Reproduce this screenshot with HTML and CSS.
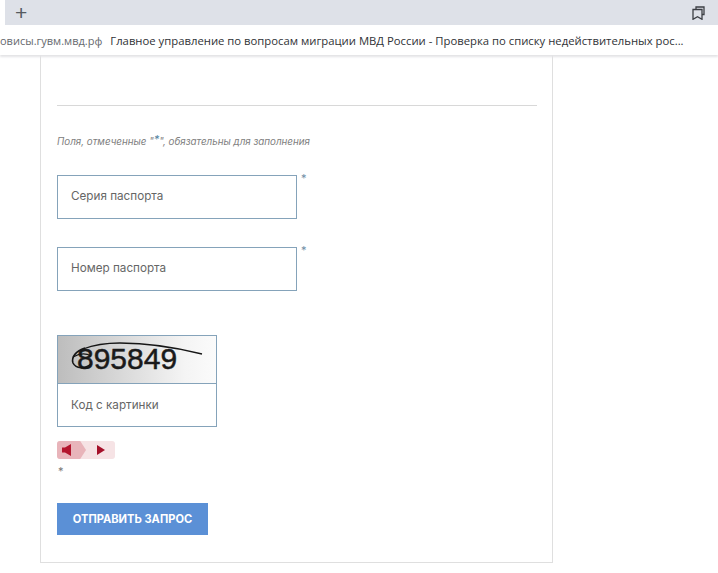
FILE: index.html
```html
<!DOCTYPE html>
<html lang="ru">
<head>
    <meta charset="UTF-8">
    <meta name="viewport" content="width=device-width, initial-scale=1.0">
    <title>Проверка по списку недействительных паспортов</title>
    <link rel="stylesheet" href="styles.css">
</head>
<body>
    <div class="tabbar">
        <span class="new-tab">+</span>
        <svg class="tab-icon" width="13" height="14" viewBox="0 0 13 14" fill="none" stroke="#3c3f44" stroke-width="1.3">
            <path d="M4 3.500V1h8v7.500h-2"/>
            <path d="M1 3.500h9v9.800L5.500 10.800 1 13.300z"/>
        </svg>
    </div>
    <div class="bookmarks">
        <span class="bookmark-muted">овисы.гувм.мвд.рф</span>
        <span class="bookmark-title">Главное управление по вопросам миграции МВД России - Проверка по списку недействительных рос...</span>
    </div>
    <div class="page">
        <div class="card">
            <div class="divider"></div>
            <p class="note">Поля, отмеченные "<span class="note-star">*</span>", обязательны для заполнения</p>
            <div class="field">
                <div class="input">Серия паспорта</div>
                <span class="star">*</span>
            </div>
            <div class="field">
                <div class="input">Номер паспорта</div>
                <span class="star">*</span>
            </div>
            <div class="captcha">
                <div class="captcha-image">
                    <span class="captcha-digits">895849</span>
                    <svg class="captcha-noise" width="158" height="47" viewBox="0 0 158 47" fill="none" stroke="#161616">
                        <path d="M25 13C38 8 50 7 62 7C95 7 120 12 144 18" stroke-width="1.300"/>
                        <path d="M27 12C18 15 13 21 15 27C18 33 27 33 33 28" stroke-width="1.600"/>
                        <path d="M15 21C22 17 28 17 33 20" stroke-width="1.200"/>
                    </svg>
                </div>
                <div class="captcha-input">Код с картинки</div>
            </div>
            <div class="audio">
                <div class="audio-btn audio-btn-active">
                    <svg width="10" height="12" viewBox="0 0 10 12"><path d="M0 3.500h3L9 0v12L3 8.500H0z" fill="#b3152d"/></svg>
                </div>
                <div class="audio-btn">
                    <svg width="8" height="10" viewBox="0 0 8 10"><path d="M0 0l8 5-8 5z" fill="#a5102a"/></svg>
                </div>
            </div>
            <div class="captcha-star">*</div>
            <button class="submit">ОТПРАВИТЬ ЗАПРОС</button>
        </div>
    </div>
</body>
</html>
```

FILE: styles.css
```css
body {
    margin: 0;
    height: 573px;
    overflow: hidden;
    background: #fff;
    font-family: 'Inter', 'Noto Sans', sans-serif;
    color: #666;
}

.tabbar {
    height: 25px;
    margin-left: 5px;
    padding: 0 13px 0 10px;
    display: flex;
    align-items: center;
    justify-content: space-between;
    background: #dee1e8;
}

.new-tab {
    font-family: 'Liberation Sans', sans-serif;
    font-size: 21px;
    font-weight: 300;
    color: #555a60;
}

.bookmarks {
    height: 30px;
    display: flex;
    align-items: center;
    gap: 8px;
    font-family: 'Open Sans', sans-serif;
    font-size: 11.300px;
    white-space: nowrap;
    overflow: hidden;
    box-shadow: 0 2px 2px #e4e4e6;
    position: relative;
}

.bookmark-muted {
    font-size: 11px;
    color: #66696e;
}

.bookmark-title {
    color: #303236;
}

.page {
    padding-left: 40px;
}

.card {
    box-sizing: border-box;
    width: 513px;
    height: 508px;
    padding: 50px 15px 0 16px;
    border: 1px solid #dfdfdf;
    border-top: none;
}

.divider {
    height: 1px;
    background: #d8d8d8;
}

.note {
    margin: 28px 0 0;
    height: 15px;
    line-height: 14px;
    font-size: 9.800px;
    font-style: italic;
    color: #808080;
}

.note-star {
    position: relative;
    top: -2px;
    font-size: 11px;
    color: #4f7fa0;
}

.field {
    display: flex;
    align-items: flex-start;
    margin-top: 26px;
}

.field + .field {
    margin-top: 28px;
}

.input {
    box-sizing: border-box;
    width: 240px;
    height: 44px;
    padding: 0 0 2px 13px;
    display: flex;
    align-items: center;
    border: 1px solid #85a3ba;
    font-size: 11.700px;
}

.star {
    margin-left: 4px;
    line-height: 6px;
    font-size: 11px;
    color: #6d8ea5;
}

.captcha {
    box-sizing: border-box;
    width: 160px;
    margin-top: 44px;
    border: 1px solid #85a3ba;
}

.captcha-image {
    height: 47px;
    position: relative;
    overflow: hidden;
    border-bottom: 1px solid #85a3ba;
    background: linear-gradient(90deg, #bdbdbd, #dcdcdc 45%, #f4f4f4 80%, #fbfbfb);
}

.captcha-digits {
    display: block;
    padding-left: 19px;
    line-height: 45px;
    font-family: 'Liberation Sans', sans-serif;
    font-size: 30px;
    color: #1a1a1a;
    -webkit-text-stroke: 0.5px #1a1a1a;
}

.captcha-noise {
    position: absolute;
    left: 0;
    top: 0;
}

.captcha-input {
    height: 42px;
    padding-left: 13px;
    box-sizing: border-box;
    display: flex;
    align-items: center;
    font-size: 11.700px;
}

.audio {
    width: 58px;
    height: 18px;
    margin-top: 14px;
    display: flex;
    border-radius: 3px;
    background: #f6e3e5;
}

.audio-btn {
    width: 29px;
    display: flex;
    align-items: center;
    justify-content: center;
}

.audio-btn-active {
    background: #e8b4ba;
    border-radius: 3px;
    clip-path: polygon(0 0, 80% 0, 100% 50%, 80% 100%, 0 100%);
    justify-content: flex-start;
    padding-left: 5px;
    box-sizing: border-box;
}

.captcha-star {
    height: 11px;
    margin-top: 6px;
    padding-left: 1px;
    line-height: 12px;
    font-size: 11px;
    color: #777;
}

.submit {
    display: block;
    width: 151px;
    height: 32px;
    margin-top: 27px;
    padding: 0;
    border: none;
    background: #5b90d6;
    color: #fff;
    font-family: 'Inter', 'Noto Sans', sans-serif;
    font-size: 11.100px;
    font-weight: 700;
}
```
